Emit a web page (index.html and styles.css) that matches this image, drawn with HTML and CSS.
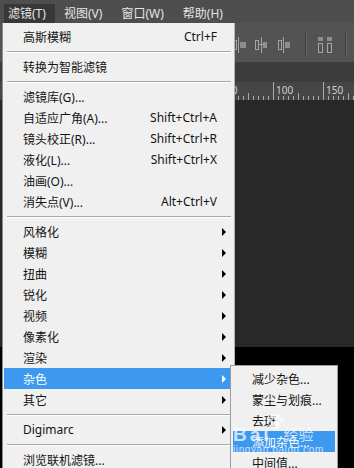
FILE: index.html
```html
<!DOCTYPE html>
<html lang="zh-CN">
<head>
    <meta charset="UTF-8">
    <meta name="viewport" content="width=device-width, initial-scale=1.0">
    <title>滤镜菜单</title>
    <link rel="stylesheet" href="styles.css">
</head>
<body>
    <div class="app">
        <!-- menu bar -->
        <div class="menubar">
            <span class="menubar-item active">滤镜(T)</span>
            <span class="menubar-item">视图(V)</span>
            <span class="menubar-item">窗口(W)</span>
            <span class="menubar-item">帮助(H)</span>
        </div>

        <!-- options bar with align icons -->
        <div class="options-bar">
            <svg class="tool-icon icon-a" width="16" height="16" viewBox="0 0 16 16">
                <rect x="2.5" y="3.5" width="3" height="9" fill="none" stroke="#a4a4a4"/>
                <rect x="7" y="0" width="1" height="16" fill="#a4a4a4"/>
                <rect x="9" y="5" width="6" height="6" fill="#8e8e8e"/>
            </svg>
            <svg class="tool-icon icon-b" width="16" height="16" viewBox="0 0 16 16">
                <rect x="2.5" y="3.5" width="3" height="9" fill="none" stroke="#a4a4a4"/>
                <rect x="8" y="0" width="1" height="16" fill="#a4a4a4"/>
                <rect x="10" y="5" width="4" height="6" fill="#8e8e8e"/>
                <rect x="6" y="7" width="5" height="1" fill="#a4a4a4"/>
            </svg>
            <svg class="tool-icon icon-c" width="16" height="16" viewBox="0 0 16 16">
                <rect x="2.5" y="3.5" width="3" height="9" fill="none" stroke="#a4a4a4"/>
                <rect x="7" y="0" width="1" height="16" fill="#a4a4a4"/>
                <rect x="9" y="5" width="5" height="6" fill="#8e8e8e"/>
            </svg>
            <span class="tool-sep sep-1"></span>
            <svg class="tool-icon icon-d" width="16" height="16" viewBox="0 0 16 16">
                <rect x="1" y="0" width="5" height="4" fill="#8e8e8e"/>
                <rect x="1.5" y="6.5" width="4" height="9" fill="none" stroke="#a4a4a4"/>
                <rect x="10" y="0" width="5" height="4" fill="#8e8e8e"/>
                <rect x="10.5" y="6.5" width="4" height="9" fill="none" stroke="#a4a4a4"/>
            </svg>
            <span class="tool-sep sep-2"></span>
        </div>

        <div class="tab-band"></div>

        <!-- ruler -->
        <div class="ruler">
            <svg width="354" height="18" viewBox="0 0 354 18">
                <defs>
                    <pattern id="ticks" x="3" y="0" width="5" height="18" patternUnits="userSpaceOnUse">
                        <rect x="0" y="14" width="1" height="4" fill="#a9a9a9"/>
                    </pattern>
                </defs>
                <rect x="0" y="0" width="354" height="18" fill="url(#ticks)"/>
                <rect x="248" y="11" width="1" height="7" fill="#a9a9a9"/>
                <rect x="298" y="11" width="1" height="7" fill="#a9a9a9"/>
                <rect x="348" y="11" width="1" height="7" fill="#a9a9a9"/>
                <rect x="223" y="0" width="1" height="18" fill="#a9a9a9"/>
                <rect x="273" y="0" width="1" height="18" fill="#a9a9a9"/>
                <rect x="323" y="0" width="1" height="18" fill="#a9a9a9"/>
                <text x="226" y="12" class="ruler-num">50</text>
                <text x="276" y="12" class="ruler-num">100</text>
                <text x="326" y="12" class="ruler-num">150</text>
            </svg>
        </div>

        <div class="pasteboard"></div>
        <div class="document"></div>

        <!-- filter menu -->
        <div class="menu">
            <div class="menu-item"><span class="label">高斯模糊</span><span class="key">Ctrl+F</span></div>
            <div class="menu-sep"></div>
            <div class="menu-item"><span class="label">转换为智能滤镜</span></div>
            <div class="menu-sep"></div>
            <div class="menu-item"><span class="label">滤镜库(G)...</span></div>
            <div class="menu-item"><span class="label">自适应广角(A)...</span><span class="key">Shift+Ctrl+A</span></div>
            <div class="menu-item"><span class="label">镜头校正(R)...</span><span class="key">Shift+Ctrl+R</span></div>
            <div class="menu-item"><span class="label">液化(L)...</span><span class="key">Shift+Ctrl+X</span></div>
            <div class="menu-item"><span class="label">油画(O)...</span></div>
            <div class="menu-item"><span class="label">消失点(V)...</span><span class="key">Alt+Ctrl+V</span></div>
            <div class="menu-sep"></div>
            <div class="menu-item has-sub"><span class="label">风格化</span></div>
            <div class="menu-item has-sub"><span class="label">模糊</span></div>
            <div class="menu-item has-sub"><span class="label">扭曲</span></div>
            <div class="menu-item has-sub"><span class="label">锐化</span></div>
            <div class="menu-item has-sub"><span class="label">视频</span></div>
            <div class="menu-item has-sub"><span class="label">像素化</span></div>
            <div class="menu-item has-sub"><span class="label">渲染</span></div>
            <div class="menu-item has-sub selected"><span class="label">杂色</span></div>
            <div class="menu-item has-sub"><span class="label">其它</span></div>
            <div class="menu-sep"></div>
            <div class="menu-item has-sub"><span class="label">Digimarc</span></div>
            <div class="menu-sep"></div>
            <div class="menu-item"><span class="label">浏览联机滤镜...</span></div>
        </div>

        <!-- noise submenu -->
        <div class="submenu">
            <div class="menu-item"><span class="label">减少杂色...</span></div>
            <div class="menu-item"><span class="label">蒙尘与划痕...</span></div>
            <div class="menu-item"><span class="label">去斑</span></div>
            <div class="menu-item selected"><span class="label">添加杂色...</span></div>
            <div class="menu-item"><span class="label">中间值...</span></div>
        </div>

        <!-- watermark -->
        <div class="watermark">
            <div class="wm-top">
                <span class="wm-bai">Bai</span>
                <svg class="wm-paw" width="18" height="16" viewBox="0 0 18 16">
                    <circle cx="3" cy="7" r="2.2" fill="#fff"/>
                    <circle cx="7" cy="3" r="2.2" fill="#fff"/>
                    <circle cx="11.5" cy="3" r="2.2" fill="#fff"/>
                    <circle cx="15.5" cy="7" r="2.2" fill="#fff"/>
                    <ellipse cx="9.2" cy="12" rx="4.8" ry="3.8" fill="#fff"/>
                </svg>
                <span class="wm-jy">经验</span>
            </div>
            <div class="wm-url">jingyan.baidu.com</div>
        </div>
    </div>
</body>
</html>
```

FILE: styles.css
```css
* {
    box-sizing: border-box;
}

body {
    margin: 0;
    background-color: #282828;
    font-family: "Noto Sans", "Noto Sans CJK SC", sans-serif;
    font-size: 12px;
}

.app {
    position: relative;
    width: 354px;
    height: 468px;
    overflow: hidden;
    display: flex;
    flex-direction: column;
}

/* menu bar */
.menubar {
    height: 23px;
    flex: none;
    display: flex;
    align-items: flex-end;
    gap: 7px;
    padding-left: 4px;
    background-color: #4e4e4e;
}

.menubar-item {
    height: 19px;
    line-height: 19px;
    padding: 0 6px;
    color: #e4e4e4;
}

.menubar-item.active {
    width: 51px;
    margin-right: -4px;
    padding-left: 4px;
    background-color: #383838;
}

/* options bar */
.options-bar {
    height: 39px;
    flex: none;
    display: flex;
    align-items: flex-start;
    padding-left: 231px;
    background-color: #535353;
}

.tool-icon {
    display: block;
    margin-top: 14px;
}

.icon-b {
    margin-left: 6px;
}

.icon-c {
    margin-left: 7px;
}

.tool-sep {
    width: 1px;
    height: 24px;
    margin-top: 10px;
    background-color: #3a3a3a;
    box-shadow: 1px 0 0 #666;
}

.sep-1 {
    margin-left: 13px;
}

.icon-d {
    margin-left: 11px;
}

.sep-2 {
    margin-left: 12px;
}

.tab-band {
    height: 20px;
    flex: none;
    background-color: #3c3c3c;
}

.ruler {
    height: 18px;
    flex: none;
    background-color: #464646;
}

.ruler svg {
    display: block;
}

.ruler-num {
    font-family: "Noto Sans", sans-serif;
    font-size: 10px;
    fill: #cfcfcf;
}

.pasteboard {
    height: 247px;
    flex: none;
    background-color: #282828;
}

.document {
    flex: 1;
    background-color: #000;
}

/* dropdown menus */
.menu {
    position: absolute;
    left: 2px;
    top: 23px;
    width: 233px;
    height: 460px;
    padding: 3px 1px 0 1px;
    background-color: #f0f0f0;
    border-left: 1px solid #8c8c8c;
    border-right: 1px solid #b4b4b4;
}

.menu-item {
    display: flex;
    align-items: center;
    height: 21px;
    padding: 0 16px 0 19px;
    color: #141414;
    white-space: nowrap;
}

.menu-item .label {
    flex: 1;
}

.menu-item.has-sub::after {
    content: "";
    width: 0;
    height: 0;
    margin-right: -9px;
    border-left: 4px solid #000;
    border-top: 4px solid transparent;
    border-bottom: 4px solid transparent;
}

.menu-item.selected {
    background-color: #3d98ef;
    color: #fff;
}

.menu-item.selected::after {
    border-left-color: #fff;
}

.menu-sep {
    height: 9px;
    padding-top: 4px;
    margin: 0 2px 0 3px;
}

.menu-sep::before {
    content: "";
    display: block;
    height: 1px;
    background-color: #a8a8a8;
    box-shadow: 0 1px 0 #fff;
}

.submenu {
    position: absolute;
    left: 230px;
    top: 365px;
    width: 108px;
    height: 120px;
    padding: 2px;
    background-color: #f0f0f0;
    border: 1px solid #9c9c9c;
}

.submenu .menu-item {
    padding-left: 19px;
    padding-right: 4px;
}

/* watermark */
.watermark {
    position: absolute;
    left: 233px;
    top: 413px;
    color: #fff;
    opacity: 0.72;
    pointer-events: none;
}

.wm-top {
    display: flex;
    align-items: flex-end;
    height: 30px;
}

.wm-bai {
    font-family: "Liberation Sans", sans-serif;
    font-weight: bold;
    font-size: 19px;
    line-height: 17px;
    letter-spacing: 3px;
}

.wm-paw {
    align-self: flex-start;
    margin-left: -6px;
}

.wm-jy {
    font-size: 15px;
    line-height: 17px;
    margin-left: 0;
}

.wm-url {
    margin-top: 2px;
    font-family: "Liberation Sans", sans-serif;
    font-size: 10px;
    line-height: 10px;
    letter-spacing: 0.6px;
}
```
